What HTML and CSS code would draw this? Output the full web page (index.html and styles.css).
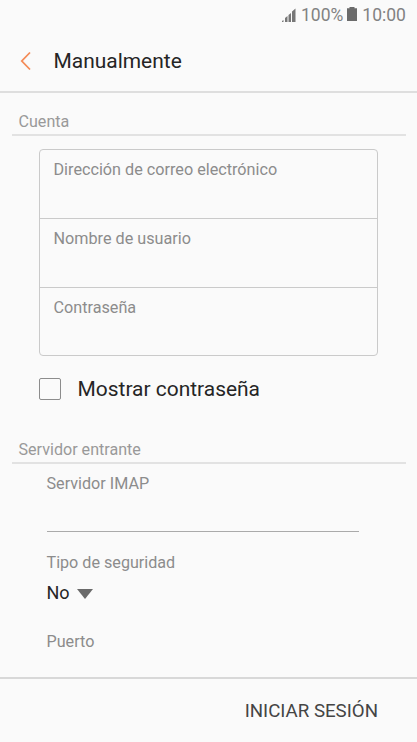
FILE: index.html
```html
<!DOCTYPE html>
<html lang="es">
<head>
<meta charset="utf-8">
<title>Manualmente</title>
<link rel="stylesheet" href="styles.css">
</head>
<body>
<div class="screen">
  <div class="status">
    <svg class="signal" width="15" height="14" viewBox="0 0 15 14"><path d="M0 14v-1l1.500-1v2zM3 14v-4l2.500-2v6zM6.500 14V7l2.500-2v9zM10 14V3.500l3.500-3V14z"/></svg>
    <span class="level">100%</span>
    <svg class="battery" width="10" height="14" viewBox="0 0 10 14"><path d="M2.500 0h5v1.300H10V14H0V1.300h2.500z"/></svg>
    <span class="clock">10:00</span>
  </div>
  <header class="bar">
    <svg class="back" width="12" height="20" viewBox="0 0 12 20"><path d="M10 1.500L1.800 10l8.200 8.500"/></svg>
    <h1 class="title">Manualmente</h1>
  </header>
  <main class="content">
    <h2 class="section">Cuenta</h2>
    <div class="group">
      <div class="field">Dirección de correo electrónico</div>
      <div class="field">Nombre de usuario</div>
      <div class="field">Contraseña</div>
    </div>
    <div class="check"><span class="box"></span><span class="check-label">Mostrar contraseña</span></div>
    <h2 class="section section-server">Servidor entrante</h2>
    <div class="server">
      <div class="input">Servidor IMAP</div>
      <div class="label">Tipo de seguridad</div>
      <div class="select"><span>No</span><svg width="16" height="10" viewBox="0 0 16 10"><path d="M0 0h16L8 10z"/></svg></div>
      <div class="label">Puerto</div>
    </div>
  </main>
  <footer class="footer"><span class="login">INICIAR SESIÓN</span></footer>
</div>
</body>
</html>
```
FILE: styles.css
```css
* { box-sizing: border-box; }
body { margin: 0; background: #fafafa; font-family: Roboto, sans-serif; color: #252525; }
.screen { width: 417px; height: 742px; display: flex; flex-direction: column; overflow: hidden; }
.status { height: 30px; padding: 0 12px 0 282px; display: flex; align-items: center; font-size: 17.500px; line-height: 30px; color: #828282; white-space: nowrap; }
.status svg { flex: none; fill: #777; }
.status .battery { fill: #6b6b6b; margin: 0 5px 2px 4px; }
.status .signal { margin-bottom: 1px; }
.level { margin-left: 4px; }
.bar { height: 63px; border-bottom: 2px solid #dedede; padding-left: 20px; display: flex; align-items: center; }
.back { fill: none; stroke: #f48b57; stroke-width: 1.800; margin-right: 21.500px; }
.title { margin: 0; font-size: 20.950px; line-height: 24px; font-weight: 400; }
.content { flex: 1; min-height: 0; padding: 0 11px 0 12px; }
.section { margin: 0; height: 43px; padding: 19px 0 0 6.500px; border-bottom: 2px solid #e2e2e2; font-size: 16.100px; line-height: 20px; font-weight: 400; color: #999; }
.group { margin: 13px 28px 0 27px; border: 1px solid #cacaca; border-radius: 4px; height: 207px; }
.field { height: 69px; padding: 10px 13.500px; font-size: 16.200px; line-height: 20px; color: #8c8c8c; }
.field:first-child { height: 68px; }
.field + .field { border-top: 1px solid #cacaca; }
.check { height: 67px; padding: 0 0 1px 27px; display: flex; align-items: center; }
.box { width: 22px; height: 22px; border: 1px solid #8c8c8c; border-radius: 2px; margin: 0 16.500px 1px 0; }
.check-label { font-size: 20.950px; line-height: 24px; }
.section-server { height: 41px; padding-top: 17px; }
.server { padding: 0 35px 0 34.500px; font-size: 16.150px; line-height: 20px; color: #8c8c8c; }
.input { width: 312.500px; height: 68px; padding-top: 10px; border-bottom: 1px solid #aaa; margin-bottom: 21px; }
.label { height: 20px; }
.select { height: 59px; padding-top: 8px; display: flex; align-items: flex-start; font-size: 18px; line-height: 24px; color: #252525; }
.select svg { margin: 8px 0 0 7.500px; fill: #6a6a6a; }
.footer { height: 65px; border-top: 2px solid #d8d8d8; padding: 1px 39px 0 0; display: flex; align-items: center; justify-content: flex-end; font-size: 18.700px; color: #444; }
```
